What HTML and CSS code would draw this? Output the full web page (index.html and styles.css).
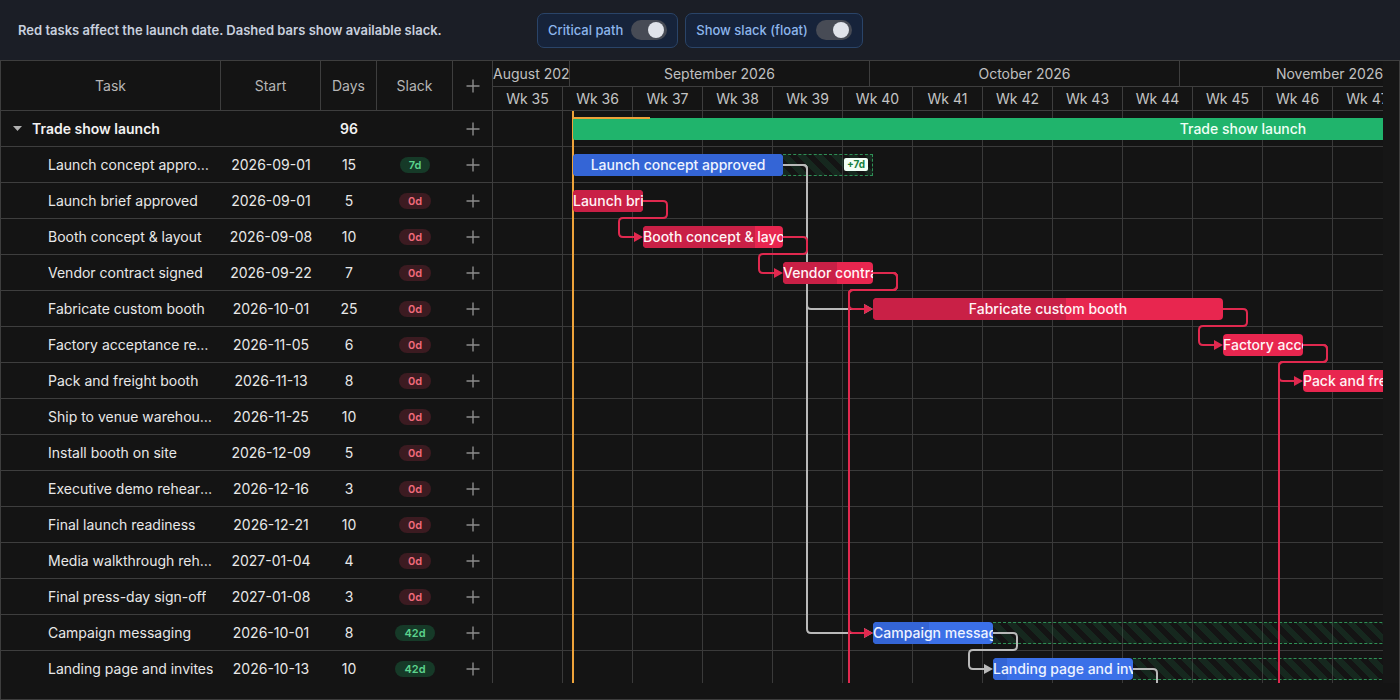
FILE: index.html
```html
<!DOCTYPE html>
<html lang="en">
  <head>
    <meta charset="UTF-8" />
    <meta name="viewport" content="width=device-width, initial-scale=1.0" />
    <title>Trade Show Launch Plan</title>
    <link rel="stylesheet" href="styles.css">
  </head>
  <body>
    <header class="topbar">
      <p class="hint">Red tasks affect the launch date. Dashed bars show available slack.</p>
      <div class="controls">
        <button class="toggle" type="button">Critical path <span class="switch"></span></button>
        <button class="toggle" type="button">Show slack (float) <span class="switch"></span></button>
      </div>
    </header>

    <div class="gantt">
      <div class="gantt-main">
        <div class="grid-pane">
          <div class="grid-head">
            <div class="col col-task">Task</div>
            <div class="col col-start">Start</div>
            <div class="col col-days">Days</div>
            <div class="col col-slack">Slack</div>
            <div class="col col-add">
              <svg class="plus" width="14" height="14" viewBox="0 0 14 14"><path d="M7 0.5v13M0.5 7h13" /></svg>
            </div>
          </div>
          <div class="grid-body" id="grid-body"></div>
        </div>

        <div class="chart-pane">
          <div class="chart">
            <div class="chart-head">
              <div class="months" id="months"></div>
              <div class="weeks" id="weeks"></div>
            </div>
            <div class="chart-body" id="chart-body"></div>
          </div>
          <div class="gutter"></div>
        </div>
      </div>
      <div class="gantt-foot"></div>
    </div>

    <script>
      const ORIGIN = Date.UTC(2026, 7, 24); // Monday of week 35
      const DAY_W = 10;
      const ROW_H = 36;
      const MONTHS = ["January", "February", "March", "April", "May", "June", "July",
        "August", "September", "October", "November", "December"];

      const summary = { name: "Trade show launch", start: "2026-09-01", days: 96 };

      const tasks = [
        { name: "Launch concept approved", start: "2026-09-01", days: 15, slack: 7, progress: 100 },
        { name: "Launch brief approved", start: "2026-09-01", days: 5, slack: 0, progress: 100 },
        { name: "Booth concept & layout", start: "2026-09-08", days: 10, slack: 0, progress: 80 },
        { name: "Vendor contract signed", start: "2026-09-22", days: 7, slack: 0, progress: 60 },
        { name: "Fabricate custom booth", start: "2026-10-01", days: 25, slack: 0, progress: 55 },
        { name: "Factory acceptance review", start: "2026-11-05", days: 6, slack: 0, progress: 0 },
        { name: "Pack and freight booth", start: "2026-11-13", days: 8, slack: 0, progress: 0 },
        { name: "Ship to venue warehouse", start: "2026-11-25", days: 10, slack: 0, progress: 0 },
        { name: "Install booth on site", start: "2026-12-09", days: 5, slack: 0, progress: 0 },
        { name: "Executive demo rehearsal", start: "2026-12-16", days: 3, slack: 0, progress: 0 },
        { name: "Final launch readiness", start: "2026-12-21", days: 10, slack: 0, progress: 0 },
        { name: "Media walkthrough rehearsal", start: "2027-01-04", days: 4, slack: 0, progress: 0 },
        { name: "Final press-day sign-off", start: "2027-01-08", days: 3, slack: 0, progress: 0 },
        { name: "Campaign messaging", start: "2026-10-01", days: 8, slack: 42, progress: 47 },
        { name: "Landing page and invites", start: "2026-10-13", days: 10, slack: 42, progress: 10 },
        { name: "Press kit and media list", start: "2026-10-01", days: 12, slack: 38, progress: 0 },
        { name: "Venue logistics plan", start: "2026-11-13", days: 6, slack: 18, progress: 0 },
      ];

      const links = [
        [0, 4], [0, 13], [13, 14], [14, 16],
        [1, 2], [2, 3], [3, 4], [3, 13], [3, 15], [4, 5], [5, 6], [5, 16],
        [6, 7], [7, 8], [8, 9], [9, 10], [10, 11], [11, 12],
      ];

      function parse(iso) {
        const [y, m, d] = iso.split("-").map(Number);
        return Date.UTC(y, m - 1, d);
      }

      function dayIndex(ts) {
        return Math.round((ts - ORIGIN) / 86400000);
      }

      function addWorkdays(ts, n) {
        const d = new Date(ts);
        let count = 0;
        while (count < n) {
          const wd = d.getUTCDay();
          if (wd !== 0 && wd !== 6) count++;
          d.setUTCDate(d.getUTCDate() + 1);
        }
        return d.getTime();
      }

      const plusIcon = `<svg class="plus" width="14" height="14" viewBox="0 0 14 14"><path d="M7 0.5v13M0.5 7h13" /></svg>`;

      tasks.forEach((t) => {
        t.from = parse(t.start);
        t.to = addWorkdays(t.from, t.days);
        t.critical = t.slack === 0;
      });
      summary.from = parse(summary.start);
      summary.to = Math.max(...tasks.map((t) => t.to));

      function renderGrid() {
        const body = document.getElementById("grid-body");
        let html = `
          <div class="row summary-row">
            <div class="cell cell-task">
              <svg class="caret" width="9" height="5" viewBox="0 0 9 5"><path d="M0 0h9L4.5 5z" /></svg>
              <span>${summary.name}</span>
            </div>
            <div class="cell cell-start"></div>
            <div class="cell cell-days">${summary.days}</div>
            <div class="cell cell-slack"></div>
            <div class="cell cell-add">${plusIcon}</div>
          </div>`;
        tasks.forEach((t) => {
          html += `
          <div class="row">
            <div class="cell cell-task"><span class="task-name">${t.name.replace("&", "&amp;")}</span></div>
            <div class="cell cell-start">${t.start}</div>
            <div class="cell cell-days">${t.days}</div>
            <div class="cell cell-slack"><span class="pill ${t.critical ? "pill-red" : "pill-green"}">${t.slack}d</span></div>
            <div class="cell cell-add">${plusIcon}</div>
          </div>`;
        });
        body.innerHTML = html;
      }

      function renderHeader() {
        const months = document.getElementById("months");
        const weeks = document.getElementById("weeks");
        let cursor = ORIGIN;
        let html = "";
        for (let i = 0; i < 5; i++) {
          const d = new Date(cursor);
          const next = Date.UTC(d.getUTCFullYear(), d.getUTCMonth() + 1, 1);
          let width = dayIndex(next) * DAY_W - dayIndex(cursor) * DAY_W;
          if (i === 0) width -= 3;
          html += `<div class="month" style="width:${width}px">${MONTHS[d.getUTCMonth()]} ${d.getUTCFullYear()}</div>`;
          cursor = next;
        }
        months.innerHTML = html;

        let wk = "";
        for (let w = 35; w < 49; w++) {
          wk += `<div class="week">Wk ${w}</div>`;
        }
        weeks.innerHTML = wk;
      }

      function bar(cls, left, top, width, label, progress) {
        return `<div class="bar ${cls}" style="left:${left}px;top:${top}px;width:${width}px">
            <div class="bar-fill" style="width:${progress}%"></div>
            <span class="bar-label">${label}</span>
          </div>`;
      }

      function route(x1, y1, x2, y2) {
        if (x2 - x1 >= 48) {
          return [[x1, y1], [x1 + 24, y1], [x1 + 24, y2], [x2 - 8, y2]];
        }
        const mid = y1 + 17;
        return [[x1, y1], [x1 + 24, y1], [x1 + 24, mid], [x2 - 24, mid], [x2 - 24, y2], [x2 - 8, y2]];
      }

      function rounded(pts, r) {
        let d = `M${pts[0][0]} ${pts[0][1]}`;
        for (let i = 1; i < pts.length - 1; i++) {
          const [px, py] = pts[i - 1];
          const [cx, cy] = pts[i];
          const [nx, ny] = pts[i + 1];
          const rr = Math.min(r, Math.hypot(cx - px, cy - py) / 2, Math.hypot(nx - cx, ny - cy) / 2);
          const ax = cx - Math.sign(cx - px) * rr;
          const ay = cy - Math.sign(cy - py) * rr;
          const bx = cx + Math.sign(nx - cx) * rr;
          const by = cy + Math.sign(ny - cy) * rr;
          d += ` L${ax} ${ay} Q${cx} ${cy} ${bx} ${by}`;
        }
        const last = pts[pts.length - 1];
        return d + ` L${last[0]} ${last[1]}`;
      }

      function renderChart() {
        const body = document.getElementById("chart-body");
        const todayX = dayIndex(parse("2026-09-01")) * DAY_W - 1;
        let html = `<div class="today" style="left:${todayX}px"></div>`;

        const sLeft = dayIndex(summary.from) * DAY_W;
        const sWidth = (dayIndex(summary.to) - dayIndex(summary.from)) * DAY_W;

        // slack boxes
        tasks.forEach((t, i) => {
          if (t.critical) return;
          const top = ROW_H * (i + 1) + 7;
          const left = dayIndex(t.to) * DAY_W;
          const width = (dayIndex(addWorkdays(t.to, t.slack)) - dayIndex(t.to)) * DAY_W;
          html += `<div class="slack" style="left:${left}px;top:${top}px;width:${width}px"><span class="slack-badge">+${t.slack}d</span></div>`;
        });

        // dependency links, grey first so red ones sit on top
        const ordered = links.slice().sort((a, b) => tasks[a[0]].critical - tasks[b[0]].critical);
        let svg = `<svg class="links" width="890" height="572" viewBox="0 0 890 572">`;
        ordered.forEach(([a, b]) => {
          const src = tasks[a];
          const dst = tasks[b];
          const x1 = dayIndex(src.to) * DAY_W;
          const y1 = ROW_H * (a + 1) + 18;
          const x2 = dayIndex(dst.from) * DAY_W;
          const y2 = ROW_H * (b + 1) + 18;
          const cls = src.critical ? "link-red" : "link-grey";
          svg += `<path class="${cls}" d="${rounded(route(x1, y1, x2, y2), 4)}" />`;
          svg += `<polygon class="${cls}-head" points="${x2 - 9},${y2 - 5} ${x2},${y2} ${x2 - 9},${y2 + 5}" />`;
        });
        svg += `</svg>`;
        html += svg;

        html += bar("summary", sLeft, 7, sWidth, summary.name, 0);
        html += `<div class="summary-progress" style="left:${sLeft}px;width:77px"></div>`;

        tasks.forEach((t, i) => {
          const top = ROW_H * (i + 1) + 7;
          const left = dayIndex(t.from) * DAY_W;
          const width = (dayIndex(t.to) - dayIndex(t.from)) * DAY_W;
          html += bar(t.critical ? "critical" : "normal", left, top, width, t.name.replace("&", "&amp;"), t.progress);
        });

        body.innerHTML = html;
      }

      renderGrid();
      renderHeader();
      renderChart();
    </script>
  </body>
</html>
```

FILE: styles.css
```css
* {
  box-sizing: border-box;
}

body {
  font-family: Inter, "Noto Sans", sans-serif;
  background-color: #1b1e26;
  color: #e6e6e6;
  margin: 0;
  padding: 0;
  width: 1400px;
  height: 700px;
  overflow: hidden;
}

.topbar {
  height: 60px;
  display: flex;
  align-items: center;
  padding: 0 18px;
}

.hint {
  width: 519px;
  margin: 0;
  font-size: 13px;
  font-weight: 600;
  color: #c8d0de;
}

.controls {
  display: flex;
  gap: 7px;
}

.toggle {
  display: flex;
  align-items: center;
  gap: 8px;
  height: 35px;
  padding: 0 10px;
  border: 1px solid #2a4468;
  border-radius: 7px;
  background-color: #16233a;
  color: #8db6ec;
  font-family: inherit;
  font-size: 13px;
  font-weight: 500;
  cursor: pointer;
}

.switch {
  position: relative;
  width: 36px;
  height: 20px;
  border-radius: 10px;
  background-color: #474b55;
}

.switch::after {
  content: "";
  position: absolute;
  top: 2px;
  right: 3px;
  width: 16px;
  height: 16px;
  border-radius: 50%;
  background-color: #e0e3ea;
}

/* gantt frame */

.gantt {
  height: 640px;
  border: 1px solid #3e3e3e;
  background-color: #141414;
  display: flex;
  flex-direction: column;
}

.gantt-main {
  display: flex;
  height: 622px;
}

.gantt-foot {
  height: 16px;
}

.grid-pane {
  width: 492px;
  flex: none;
  border-right: 1px solid #3e3e3e;
}

.grid-head {
  display: flex;
  height: 50px;
  border-bottom: 1px solid #3e3e3e;
}

.col {
  display: flex;
  align-items: center;
  justify-content: center;
  border-right: 1px solid #3e3e3e;
  color: #b6b6b6;
  font-size: 14px;
}

.col-task,
.cell-task {
  width: 220px;
}

.col-start,
.cell-start {
  width: 100px;
}

.col-days,
.cell-days {
  width: 56px;
}

.col-slack,
.cell-slack {
  width: 76px;
}

.col-add,
.cell-add {
  width: 39px;
  border-right: none;
}

.grid-body {
  height: 572px;
  overflow: hidden;
}

.row {
  display: flex;
  align-items: center;
  height: 36px;
  border-bottom: 1px solid #3e3e3e;
  font-size: 14px;
}

.cell {
  display: flex;
  align-items: center;
  justify-content: center;
  flex: none;
  color: #e8e8e8;
}

.cell-task {
  justify-content: flex-start;
  padding: 0 6px 0 47px;
  overflow: hidden;
}

.task-name {
  overflow: hidden;
  text-overflow: ellipsis;
  white-space: nowrap;
}

.summary-row .cell-task {
  padding-left: 12px;
  font-weight: 600;
  color: #f2f2f2;
}

.summary-row .cell-days {
  font-weight: 600;
  color: #f2f2f2;
}

.caret {
  margin-right: 10px;
  fill: #b0b0b0;
}

.plus {
  fill: none;
  stroke: #8c8c8c;
  stroke-width: 1.4;
}

.pill {
  display: inline-block;
  height: 16px;
  line-height: 16px;
  padding: 0 9px;
  border-radius: 8px;
  font-size: 11px;
  font-weight: 600;
}

.pill-red {
  background-color: #3c1b21;
  color: #ef6b7b;
}

.pill-green {
  background-color: #163a28;
  color: #5cd38d;
}

/* timeline */

.chart-pane {
  flex: 1;
  display: flex;
  min-width: 0;
}

.chart {
  width: 890px;
  flex: none;
  overflow: hidden;
}

.gutter {
  flex: 1;
  background-color: #161616;
}

.chart-head {
  height: 50px;
  border-bottom: 1px solid #3e3e3e;
}

.months {
  display: flex;
  height: 26px;
  border-bottom: 1px solid #3e3e3e;
}

.month {
  flex: none;
  border-right: 1px solid #3e3e3e;
  overflow: hidden;
  white-space: nowrap;
  text-align: center;
  line-height: 25px;
  font-size: 14px;
  color: #c0c0c0;
}

.weeks {
  display: flex;
  height: 23px;
}

.week {
  flex: none;
  width: 70px;
  border-right: 1px solid #3e3e3e;
  text-align: center;
  line-height: 23px;
  font-size: 14px;
  color: #c4c4c4;
}

.chart-body {
  position: relative;
  height: 572px;
  overflow: hidden;
  background-image: linear-gradient(to right, transparent 69px, #3a3a3a 69px, #3a3a3a 70px),
    linear-gradient(to bottom, transparent 35px, #3a3a3a 35px, #3a3a3a 36px);
  background-size: 70px 100%, 100% 36px;
}

.today {
  position: absolute;
  top: 0;
  bottom: 0;
  width: 2px;
  background-color: #eea33a;
}

.slack {
  position: absolute;
  height: 22px;
  border: 1px dashed #2f8f55;
  border-left: none;
  background: repeating-linear-gradient(45deg, rgba(30, 120, 72, 0.2) 0 6px, transparent 6px 12px);
}

.slack-badge {
  position: absolute;
  top: 3px;
  right: 4px;
  height: 13px;
  line-height: 13px;
  padding: 0 3px;
  border-radius: 2px;
  background-color: #f2fff6;
  color: #17803f;
  font-size: 10px;
  font-weight: 700;
}

.links {
  position: absolute;
  left: 0;
  top: 0;
}

.link-red,
.link-grey {
  fill: none;
  stroke-width: 2;
}

.link-red {
  stroke: #e0294f;
}

.link-grey {
  stroke: #b9b9b9;
}

.link-red-head {
  fill: #e0294f;
}

.link-grey-head {
  fill: #b9b9b9;
}

.bar {
  position: absolute;
  height: 22px;
  border-radius: 4px;
  overflow: hidden;
}

.bar.critical {
  background-color: #e8264f;
}

.bar.normal {
  background-color: #3b70e8;
}

.bar.summary {
  background-color: #20b46c;
  border-radius: 2px;
}

.bar-fill {
  position: absolute;
  left: 0;
  top: 0;
  bottom: 0;
}

.critical .bar-fill {
  background-color: #c92046;
}

.normal .bar-fill {
  background-color: #3465d6;
}

.bar-label {
  position: relative;
  display: block;
  line-height: 22px;
  text-align: center;
  white-space: nowrap;
  font-size: 14px;
  font-weight: 500;
  color: #fff4f6;
}

.normal .bar-label {
  color: #eef3ff;
}

.summary .bar-label {
  color: #effff5;
}

.summary-progress {
  position: absolute;
  top: 6px;
  height: 2px;
  background-color: #eea33a;
}
```
